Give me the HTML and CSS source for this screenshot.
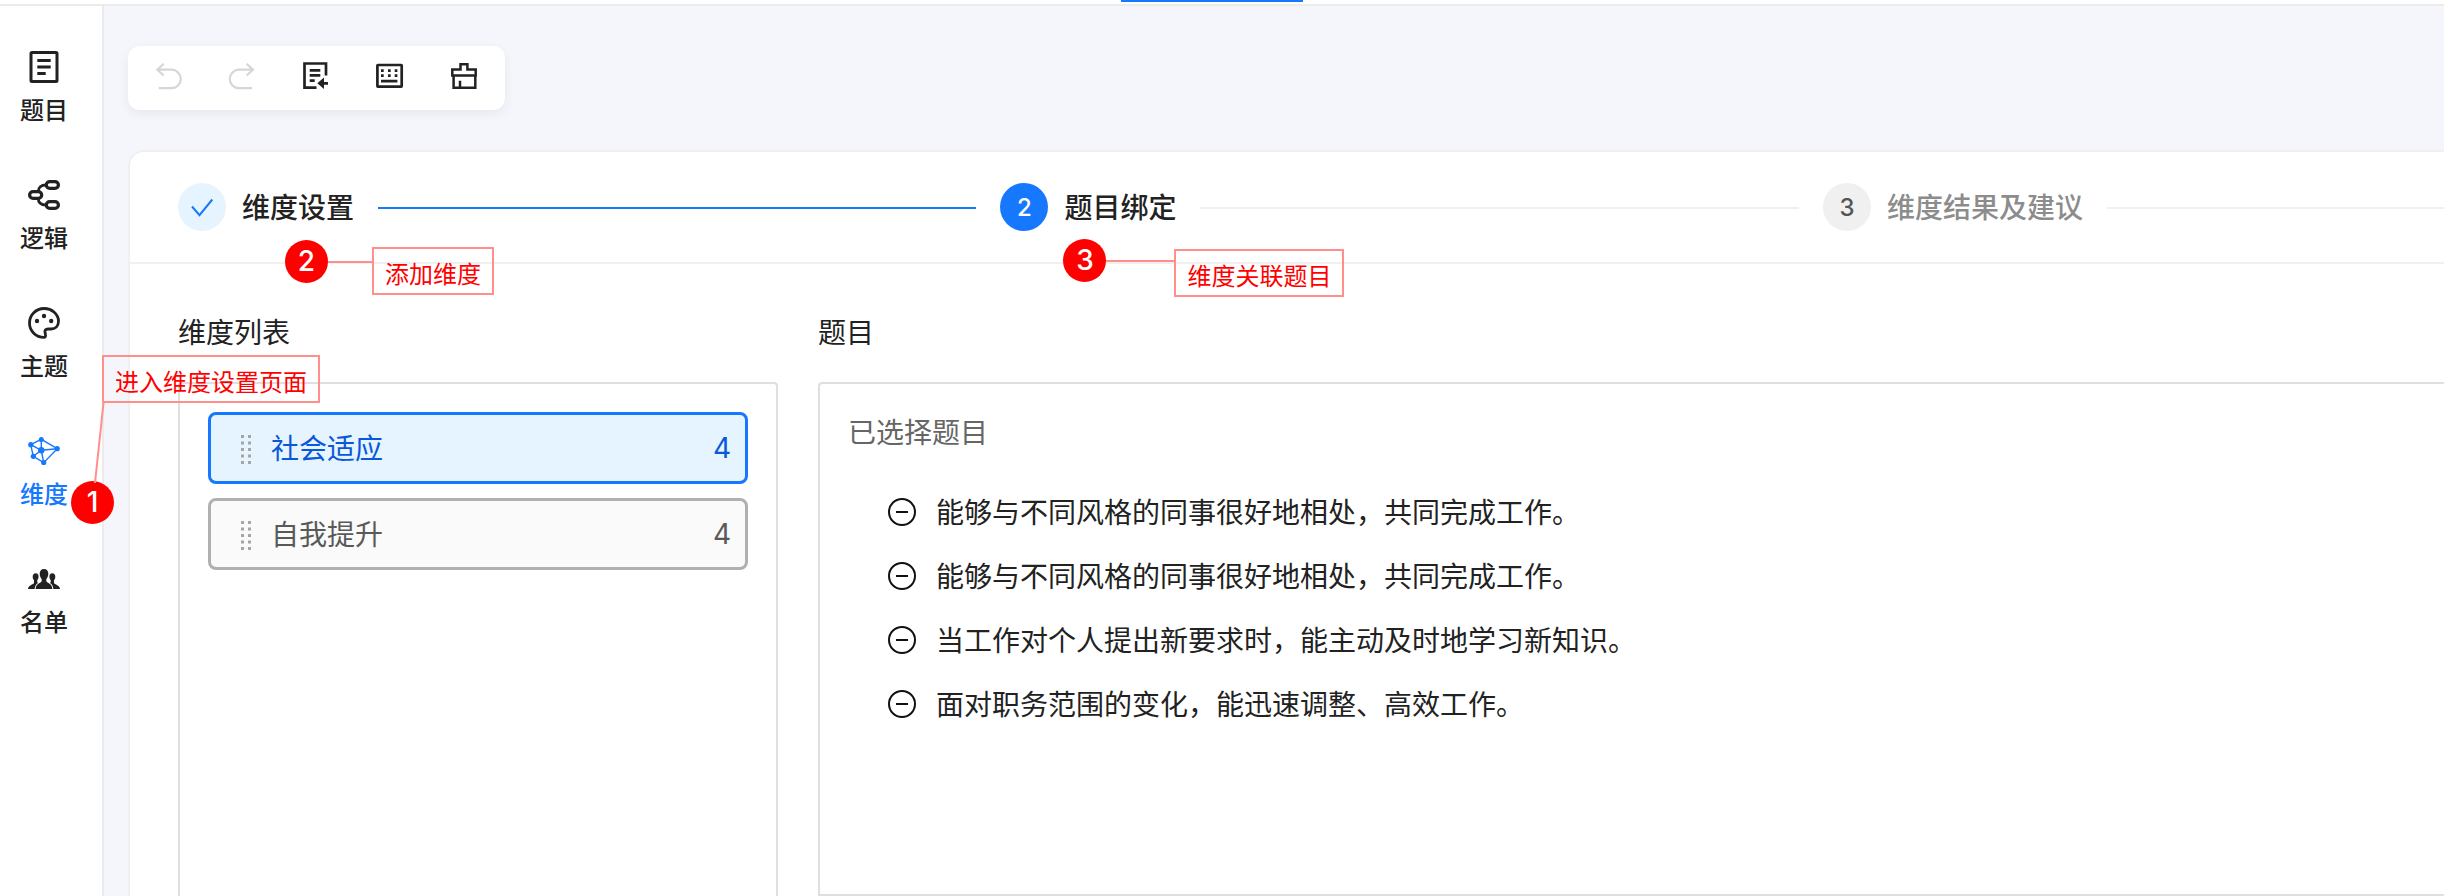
FILE: index.html
```html
<!DOCTYPE html>
<html lang="zh">
<head>
  <meta charset="UTF-8" />
  <meta name="viewport" content="width=device-width, initial-scale=1.0"/>
  <title>维度设置</title>
  <link rel="stylesheet" href="styles.css">
</head>
<body>
  <!-- 顶部导航 -->
  <header class="topbar">
    <span class="tab-line"></span>
  </header>

  <div class="layout">
    <!-- 左侧菜单 -->
    <nav class="sidebar">
      <a class="nav-item" href="#question">
        <svg class="icon" viewBox="0 0 32 32" fill="none" stroke="currentColor" stroke-width="3">
          <rect x="3" y="1.5" width="26" height="29" rx="1"/>
          <path d="M9.3 9.4H22.7M9.3 16H22.7M9.3 22.4H17.7"/>
        </svg>
        <span>题目</span>
      </a>
      <a class="nav-item" href="#logic">
        <svg class="icon" viewBox="0 0 32 32" fill="none" stroke="currentColor" stroke-width="3.2">
          <rect x="18.3" y="2.6" width="12.1" height="6.8" rx="3.4"/>
          <rect x="1.6" y="12.6" width="12.1" height="6.8" rx="3.4"/>
          <rect x="18.3" y="22.6" width="12.1" height="6.8" rx="3.4"/>
          <path stroke-width="2.8" d="M10.3 12.5C10.3 8.5 13 6 18 6M10.3 19.5C10.3 23.5 13 26 18 26"/>
        </svg>
        <span>逻辑</span>
      </a>
      <a class="nav-item" href="#theme">
        <svg class="icon" viewBox="0 0 32 32" fill="none" stroke="currentColor" stroke-width="2.8">
          <path d="M16 30.4C8 30.4 1.5 24 1.5 16S8 1.5 16 1.5S30.5 7.2 30.5 14.3C30.5 19 27.2 22 23 22H20C17.6 22 16.5 23.5 17 25.5C17.6 27.5 18.2 30.4 16 30.4Z"/>
          <g fill="currentColor" stroke="none"><circle cx="16" cy="9" r="2.2"/><circle cx="9" cy="14" r="2.2"/><circle cx="23.2" cy="14" r="2.2"/></g>
        </svg>
        <span>主题</span>
      </a>
      <div class="nav-wrap">
        <a class="nav-item active" href="#dimension">
          <svg class="icon" viewBox="0 0 32 32" fill="currentColor" stroke="currentColor">
            <path fill="none" stroke-width="1.4" d="M13.3 4.3L2.7 9.7L5.3 21.3L15.7 27.7L29.3 13.7ZV15.3L2.7 9.7M5.3 21.3L13.3 15.3L15.7 27.7M13.3 15.3L29.3 13.7"/>
            <g stroke="none">
              <circle cx="13.3" cy="4.5" r="2.5"/><circle cx="2.8" cy="9.7" r="2.6"/><circle cx="29.2" cy="13.7" r="2.6"/>
              <circle cx="13.3" cy="15.3" r="3.2"/><circle cx="5.3" cy="21.3" r="2.6"/><circle cx="15.7" cy="27.5" r="2.6"/>
            </g>
          </svg>
          <span>维度</span>
        </a>
        <div class="note note-nav">
          <svg class="note-slant" viewBox="0 0 12 80"><path d="M10.5 0L2 80"/></svg>
          <span class="note-num">1</span>
          <span class="note-text">进入维度设置页面</span>
        </div>
      </div>
      <a class="nav-item" href="#list">
        <svg class="icon" viewBox="0 0 32 32" fill="currentColor">
          <path d="M16 6C19 6 20.4 8 20.3 11C20.2 13.5 19.2 15 18.3 16.2V18.3C19 20 24.3 20.5 24.3 26H7.7C7.7 20.5 13 20 13.7 18.3V16.2C12.8 15 11.8 13.5 11.7 11C11.6 8 13 6 16 6Z"/>
          <path d="M7.6 10.2C9.5 10.2 10.7 11.5 10.6 13.8C10.5 15.5 9.9 16.5 9.3 17.3V19.2L10 20C8 21.2 7 23 6.6 26H0C0 22.5 4.5 21.8 6 20.2V17.3C5.2 16.5 4.7 15.3 4.7 13.8C4.7 11.5 5.8 10.2 7.6 10.2Z"/>
          <path d="M24.4 10.2C22.5 10.2 21.3 11.5 21.4 13.8C21.5 15.5 22.1 16.5 22.7 17.3V19.2L22 20C24 21.2 25 23 25.4 26H32C32 22.5 27.5 21.8 26 20.2V17.3C26.8 16.5 27.3 15.3 27.3 13.8C27.3 11.5 26.2 10.2 24.4 10.2Z"/>
        </svg>
        <span>名单</span>
      </a>
    </nav>

    <main class="main">
      <!-- 工具栏 -->
      <div class="toolbar">
        <button class="tool" type="button" aria-label="撤销" disabled>
          <svg class="icon" viewBox="0 0 32 32" fill="none" stroke="currentColor" stroke-width="2.2">
            <path d="M10.7 1.7L4.3 7.7L10.7 13.5M4.3 7.7H18.5A9.2 9.2 0 0 1 18.5 26.2H5.7"/>
          </svg>
        </button>
        <button class="tool" type="button" aria-label="重做" disabled>
          <svg class="icon" viewBox="0 0 32 32" fill="none" stroke="currentColor" stroke-width="2.2">
            <path d="M19.6 1.7L26 7.7L19.6 13.5M26 7.7H12A9.2 9.2 0 0 0 12 26.2H25"/>
          </svg>
        </button>
        <button class="tool" type="button" aria-label="导入题目">
          <svg class="icon" viewBox="0 0 32 32" fill="none" stroke="currentColor" stroke-width="2.7">
            <path d="M25 13.5V1.5H3.5V25.6H15.5M8.7 8.3H19.3M8.7 13.4H19.3M8.7 18.7H13.7"/>
            <path fill="currentColor" stroke="none" d="M16.3 21.3L23 15.5V20H27V22.8H23V27Z"/>
          </svg>
        </button>
        <button class="tool" type="button" aria-label="快捷键">
          <svg class="icon" viewBox="0 0 32 32" fill="none" stroke="currentColor" stroke-width="2.7">
            <rect x="2.4" y="3" width="24.3" height="21.6" rx="0.5"/>
            <path d="M6 8.7H8.7M13 8.7H15.7M19.7 8.7H22.4M6 13.7H8.7M13 13.7H15.7M19.7 13.7H22.4M6 19.2H22.4"/>
          </svg>
        </button>
        <button class="tool" type="button" aria-label="清空">
          <svg class="icon" viewBox="0 0 32 32" fill="none" stroke="currentColor" stroke-width="2.5">
            <path d="M3.3 7.6H11.5V2.3H18.4V7.6H26.7V13.5H3.3ZM4.6 13.5V25.7H26.3V13.5M11 18.7V25.7"/>
          </svg>
        </button>
      </div>

      <section class="panel">
        <!-- 步骤条 -->
        <ol class="steps">
          <li class="step done">
            <span class="step-num">
              <svg class="check" viewBox="0 0 48 48"><path d="M14 23.5L21.5 32.2L34.3 16.5"/></svg>
            </span>
            <span class="step-title">维度设置</span>
            <div class="note note-add">
              <span class="note-num">2</span>
              <span class="note-line"></span>
              <span class="note-text">添加维度</span>
            </div>
          </li>
          <li class="step current">
            <span class="step-num">2</span>
            <span class="step-title">题目绑定</span>
            <div class="note note-bind">
              <span class="note-num">3</span>
              <span class="note-line long"></span>
              <span class="note-text">维度关联题目</span>
            </div>
          </li>
          <li class="step">
            <span class="step-num">3</span>
            <span class="step-title">维度结果及建议</span>
          </li>
        </ol>

        <div class="content">
          <!-- 维度列表 -->
          <section class="column column-list">
            <h2 class="column-title">维度列表</h2>
            <div class="box box-list">
              <button class="dimension selected" type="button">
                <svg class="drag" viewBox="0 0 10 30"><path d="M1.5 0V30M8.5 0V30"/></svg>
                <span class="dimension-name">社会适应</span>
                <span>4</span>
              </button>
              <button class="dimension" type="button">
                <svg class="drag" viewBox="0 0 10 30"><path d="M1.5 0V30M8.5 0V30"/></svg>
                <span class="dimension-name">自我提升</span>
                <span>4</span>
              </button>
            </div>
          </section>

          <!-- 已绑定的题目 -->
          <section class="column column-question">
            <h2 class="column-title">题目</h2>
            <div class="box box-question">
              <h3 class="box-title">已选择题目</h3>
              <ul class="questions">
                <li class="question">
                  <button class="remove" type="button" aria-label="移除"><svg viewBox="0 0 28 28"><circle cx="14" cy="14" r="13"/><path d="M8 14H20"/></svg></button>
                  <span>能够与不同风格的同事很好地相处，共同完成工作。</span>
                </li>
                <li class="question">
                  <button class="remove" type="button" aria-label="移除"><svg viewBox="0 0 28 28"><circle cx="14" cy="14" r="13"/><path d="M8 14H20"/></svg></button>
                  <span>能够与不同风格的同事很好地相处，共同完成工作。</span>
                </li>
                <li class="question">
                  <button class="remove" type="button" aria-label="移除"><svg viewBox="0 0 28 28"><circle cx="14" cy="14" r="13"/><path d="M8 14H20"/></svg></button>
                  <span>当工作对个人提出新要求时，能主动及时地学习新知识。</span>
                </li>
                <li class="question">
                  <button class="remove" type="button" aria-label="移除"><svg viewBox="0 0 28 28"><circle cx="14" cy="14" r="13"/><path d="M8 14H20"/></svg></button>
                  <span>面对职务范围的变化，能迅速调整、高效工作。</span>
                </li>
              </ul>
            </div>
          </section>
        </div>
      </section>
    </main>
  </div>
</body>
</html>
```
FILE: styles.css
```css
* {
  box-sizing: border-box;
}
body {
  margin: 0;
  min-height: 100vh;
  display: flex;
  flex-direction: column;
  font-family: Inter, "Noto Sans CJK SC", sans-serif;
  font-size: 28px;
  line-height: 40px;
  color: #222;
  background: #f4f6fb;
}
button {
  font: inherit;
  color: inherit;
  background: none;
  border: none;
  padding: 0;
}
h2, h3, ol, ul {
  margin: 0;
  padding: 0;
  font-size: 28px;
  font-weight: 400;
  list-style: none;
}
.icon {
  display: block;
  width: 32px;
  height: 32px;
}

/* 顶部导航 */
.topbar {
  display: flex;
  justify-content: center;
  height: 6px;
  padding-right: 20px;
  background: #fff;
  border-bottom: 2px solid #ebebeb;
}
.tab-line {
  width: 182px;
  height: 2px;
  background: #1677ff;
}

.layout {
  flex: 1;
  display: flex;
}

/* 左侧菜单 */
.sidebar {
  flex: none;
  display: flex;
  flex-direction: column;
  gap: 48px;
  width: 104px;
  padding: 45px 14px 0 0;
  background: #fff;
  border-right: 2px solid #ebebeb;
}
.nav-item {
  display: flex;
  flex-direction: column;
  align-items: center;
  gap: 8px;
  color: #222;
  font-size: 24px;
  font-weight: 500;
  line-height: 40px;
  text-decoration: none;
}
.nav-item.active {
  color: #1677ff;
}
.nav-wrap {
  position: relative;
}

.main {
  flex: 1;
  min-width: 0;
  display: flex;
  flex-direction: column;
  align-items: flex-start;
  gap: 40px;
  padding: 40px 0 0 24px;
}

/* 工具栏 */
.toolbar {
  display: flex;
  gap: 42px;
  padding: 16px 24px 16px 25px;
  background: #fff;
  border-radius: 12px;
  box-shadow: 0 4px 12px rgba(0,0,0,0.06);
}
.tool:disabled {
  color: #d6d6d6;
}

.panel {
  flex: 1;
  align-self: stretch;
  display: flex;
  flex-direction: column;
  background: #fff;
  border: 2px solid #f0f0f0;
  border-width: 2px 0 0 2px;
  border-top-left-radius: 16px;
}

/* 步骤条 */
.steps {
  display: grid;
  grid-template-columns: 9fr 9fr 7fr;
  gap: 24px;
  height: 112px;
  padding-left: 48px;
  border-bottom: 2px solid #f0f0f0;
}
.step {
  position: relative;
  display: flex;
  align-items: center;
  color: #8c8c8c;
  font-weight: 500;
}
.step::after {
  content: "";
  flex: 1;
  height: 2px;
  margin: 2px 0 0 24px;
  background: #f0f0f0;
}
.step.done,
.step.current {
  color: #222;
}
.step.done::after {
  background: #1677ff;
}
.step-title {
  padding-top: 2px;
}
.step-num {
  width: 48px;
  height: 48px;
  margin-right: 16px;
  border-radius: 50%;
  background: #f0f0f0;
  color: #555;
  font-size: 24px;
  line-height: 50px;
  text-align: center;
}
.done .step-num {
  background: #e6f4ff;
}
.current .step-num {
  background: #1677ff;
  color: #fff;
}
.check {
  display: block;
  fill: none;
  stroke: #1677ff;
  stroke-width: 2;
}

/* 内容区 */
.content {
  flex: 1;
  display: flex;
  gap: 40px;
  padding: 46px 0 0 48px;
}
.column {
  display: flex;
  flex-direction: column;
  gap: 26px;
}
.column-list {
  flex: 0 0 600px;
}
.column-question {
  flex: 1;
}
.column-title {
  line-height: 46px;
}
.box {
  flex: 1;
  padding: 28px;
  border: 2px solid #dfdfdf;
}
.box-list {
  display: flex;
  flex-direction: column;
  gap: 14px;
  border-bottom: none;
  border-radius: 4px 4px 0 0;
}
.box-question {
  border-right: none;
  border-radius: 4px 0 0 0;
}
.dimension {
  display: flex;
  align-items: center;
  height: 72px;
  padding: 0 14px 0 30px;
  border: 3px solid #b0b0b0;
  border-radius: 8px;
  background: #fafafa;
  color: #595959;
}
.dimension.selected {
  border-color: #1677ff;
  background: #e6f4ff;
  color: #0958d9;
}
.dimension-name {
  flex: 1;
  padding-top: 2px;
  text-align: left;
}
.drag {
  width: 10px;
  height: 30px;
  margin: 4px 20px 0 0;
  stroke: #a6a6a6;
  stroke-width: 3;
  stroke-dasharray: 3 3.5;
}
.box-title {
  line-height: 42px;
  color: #666;
}
.questions {
  padding: 26px 0 0 40px;
}
.question {
  display: flex;
  align-items: center;
  gap: 20px;
  height: 64px;
}
.question span {
  padding-top: 2px;
}
.remove svg {
  display: block;
  width: 28px;
  height: 28px;
  fill: none;
  stroke: #111;
  stroke-width: 2;
}

/* 红色标注 */
.note {
  position: absolute;
  z-index: 1;
  display: flex;
  align-items: flex-start;
  font-weight: 400;
  white-space: nowrap;
}
.note-num {
  width: 43px;
  height: 43px;
  border-radius: 50%;
  background: #f00;
  color: #fff;
  font-size: 28px;
  font-weight: 500;
  line-height: 43px;
  text-align: center;
}
.note-line {
  width: 44px;
  height: 2px;
  margin-top: 21px;
  background: #ff8f8a;
}
.note-line.long {
  width: 68px;
}
.note-text {
  height: 48px;
  margin-top: 7px;
  padding: 6px 11px 0;
  border: 2px solid #ff8f8a;
  color: #f00;
  font-size: 24px;
}
.note-add {
  left: 107px;
  top: 88px;
}
.note-bind {
  left: 63px;
  top: 87px;
}
.note-bind .note-text {
  margin-top: 10px;
}
.note-nav {
  left: 71px;
  top: -80px;
  flex-direction: column-reverse;
}
.note-nav .note-text {
  margin: 0 0 0 31px;
}
.note-nav .note-num {
  margin-top: 78px;
}
.note-slant {
  position: absolute;
  left: 22px;
  top: 48px;
  width: 12px;
  height: 80px;
  fill: none;
  stroke: #ff8f8a;
  stroke-width: 2;
}
```
